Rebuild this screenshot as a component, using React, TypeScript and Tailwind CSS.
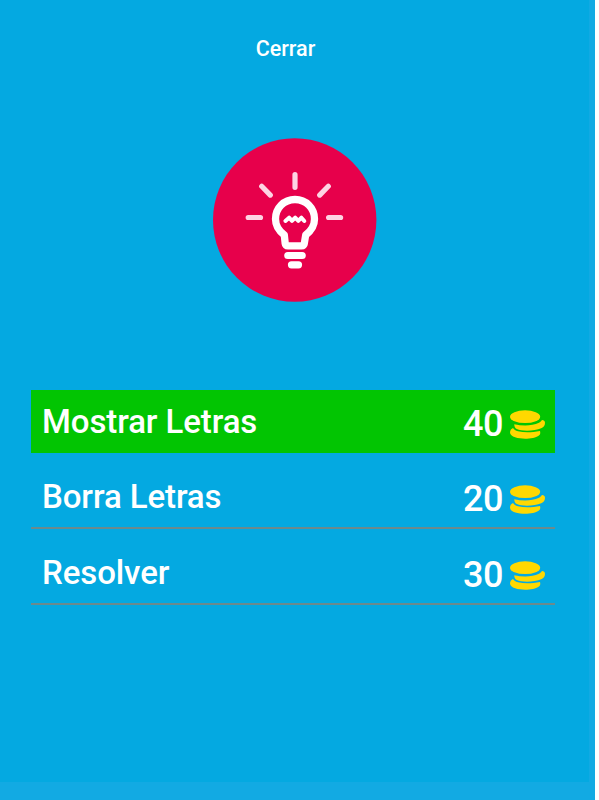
import { clsx } from 'clsx';

const hints = [
  { label: 'Mostrar Letras', price: 40, className: 'h-[63px] bg-[#02c502]' },
  { label: 'Borra Letras', price: 20, className: 'mt-3 h-16 border-b-2 border-[#6c8a8c]' },
  { label: 'Resolver', price: 30, className: 'mt-3 h-16 border-b-2 border-[#6c8a8c]' },
];

const BulbIcon = () => (
  <svg viewBox="0 0 180 180" className="size-[180px]" fill="none" strokeLinecap="round" strokeLinejoin="round">
    <circle cx="89.7" cy="90" r="81.7" fill="#e7004b" />
    <g stroke="#fdd3e3" strokeWidth="5.2">
      <path d="M90 44.7V57.3M56.7 56.3L65.3 65.1M123.3 56.3L114.7 65.1M43.2 87.5H55.5M123.6 87.5H135.6" />
    </g>
    <g stroke="#fff">
      <path
        d="M90 69.5C79 69.5 70.5 78 70.5 89C70.5 96.5 74 101 79.3 105L80.2 113.5Q80.5 115.8 83 115.8H96.5Q99 115.8 99.3 113.5L100.7 105C106 101 109.5 96.5 109.5 89C109.5 78 101 69.5 90 69.5Z"
        strokeWidth="7.3"
      />
      <path d="M80.4 91L84.1 87.7L87 90.8L90.2 87.7L93.3 90.8L96.4 87.7L99.3 91" strokeWidth="4" />
      <path d="M82.8 125.5H97.2M86.5 134.8H93.5" strokeWidth="7.2" />
    </g>
  </svg>
);

const CoinsIcon = () => (
  <svg viewBox="0 0 36 31" className="h-[31px] w-9" fill="#ffd800">
    <ellipse cx="15.1" cy="7.7" rx="15.1" ry="6.4" />
    <path d="M4.3 15.2C13 17.2 22 17 29 13.8C30.8 12.9 31.5 11.8 31.8 11C33.4 10.8 35 11.9 35 13.7C35 16 34 17.9 31.2 19.2C25 22.1 12 22.6 6.8 20C4.9 19 4.2 17.2 4.3 15.2Z" />
    <path d="M3 19C4 20.6 5.5 21.6 8 22.3C14.5 23.8 22 23.6 30 21.9C30.5 23.4 30.4 25 29.5 26C26.5 28.8 20 29.8 15.2 29.8C8.5 29.8 0 28 0 23.6C0 21.2 1.5 19.6 3 19Z" />
  </svg>
);

const App = () => {
  return (
    <div className="h-[800px] w-[599px] overflow-hidden bg-white font-['Roboto',sans-serif] font-medium text-white">
      <div className="h-full w-[595px] bg-[#12aae3]">
        <main className="h-[782px] w-[589px] bg-[#04a9e1]">
          <div className="flex justify-center pt-[37px] pr-[18px]">
            <button type="button" className="text-[21.5px] leading-6">
              Cerrar
            </button>
          </div>

          <div className="mt-[69px] ml-[205px]">
            <BulbIcon />
          </div>

          <ul className="mt-20 ml-[31px] w-[524px]">
            {hints.map((hint) => (
              <li key={hint.label} className={clsx('flex justify-between pr-[9px] pl-[11px]', hint.className)}>
                <span className="pt-3 text-[33px] leading-10 tracking-[-0.1px] whitespace-nowrap">{hint.label}</span>
                <span className="flex pt-[14px]">
                  <span className="mr-[7px] text-[36px] leading-10 tracking-[-0.5px]">{hint.price}</span>
                  <span className="pt-[5px]">
                    <CoinsIcon />
                  </span>
                </span>
              </li>
            ))}
          </ul>
        </main>
      </div>
    </div>
  );
};

export default App;
